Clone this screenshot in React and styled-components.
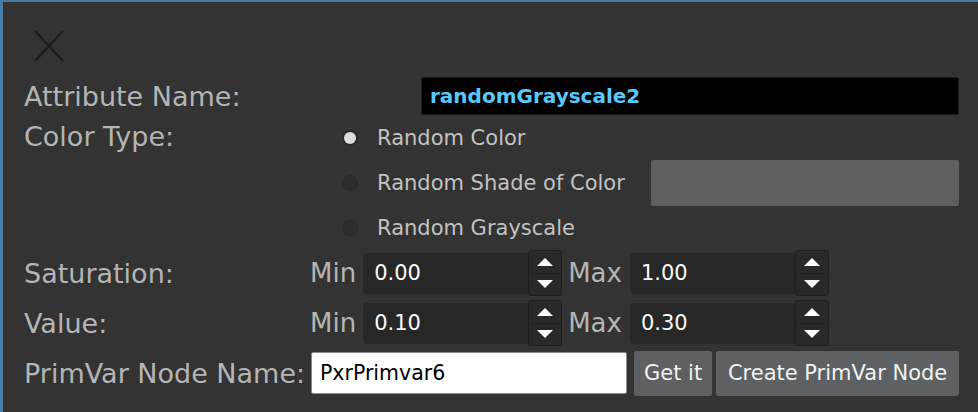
import React from 'react'
import styled, { createGlobalStyle } from 'styled-components'

const Global = createGlobalStyle`
  html, body { margin: 0; padding: 0; background: #333333; }
  body { font-family: "DejaVu Sans", "Liberation Sans", sans-serif; }
`

const Panel = styled.div`
  width: 978px;
  height: 412px;
  box-sizing: border-box;
  background: #333333;
  border-top: 2px solid #4a7ba3;
  border-left: 3px solid #4a7ba3;
  padding: 28px 19px 0 21px;
  display: flex;
  flex-direction: column;
`

const CloseButton = styled.button`
  width: 30px;
  height: 32px;
  margin-left: 10px;
  padding: 0;
  border: none;
  background: none;
  display: flex;
  cursor: pointer;
`

const Row = styled.div`
  display: flex;
  align-items: ${p => (p.top ? 'flex-start' : 'center')};
  height: ${p => p.h || 46}px;
  margin-top: ${p => p.mt || 0}px;
`

const Label = styled.div`
  width: ${p => p.w}px;
  flex: none;
  font-size: 27px;
  color: #b5b5b5;
  white-space: nowrap;
  line-height: ${p => (p.top ? '44px' : 'normal')};
`

const NameInput = styled.div`
  flex: 1;
  height: 38px;
  box-sizing: border-box;
  background: #000;
  border: 1px solid #1a1a1a;
  border-radius: 2px;
  padding-left: 8px;
  display: flex;
  align-items: center;
  font-size: 20px;
  font-weight: bold;
  color: #5ac8fa;
`

const Options = styled.div`
  flex: 1;
  display: flex;
  flex-direction: column;
`

const Option = styled.div`
  display: flex;
  align-items: center;
  height: 45px;
`

const Radio = styled.span`
  width: 20px;
  height: 20px;
  box-sizing: border-box;
  border-radius: 50%;
  background: #2d2d2d;
  border: 1px solid #3b3b3b;
  margin-right: 17px;
  display: flex;
  align-items: center;
  justify-content: center;
  &::after {
    content: '';
    width: 12px;
    height: 12px;
    border-radius: 50%;
    background: ${p => (p.on ? '#dcdcdc' : 'transparent')};
  }
`

const OptionText = styled.span`
  font-size: 21px;
  color: #c2c2c2;
`

const Swatch = styled.div`
  margin-left: auto;
  width: 308px;
  height: 46px;
  background: #5d6063;
  border-radius: 2px;
`

const MinMax = styled.span`
  font-size: 26px;
  color: #b5b5b5;
  margin-right: ${p => p.gap}px;
`

const SpinField = styled.div`
  width: 165px;
  height: 41px;
  box-sizing: border-box;
  background: #272727;
  border-radius: 4px 0 0 4px;
  padding-left: 11px;
  display: flex;
  align-items: center;
  font-size: 21px;
  color: #fafafa;
`

const Spinner = styled.div`
  width: 34px;
  height: 46px;
  box-sizing: border-box;
  background: #292929;
  border: 1px solid #1f1f1f;
  border-radius: 3px;
  display: flex;
  flex-direction: column;
  margin-right: 6px;
`

const SpinHalf = styled.div`
  flex: 1;
  display: flex;
  align-items: center;
  justify-content: center;
  & + & { border-top: 1px solid #222; }
`

const Arrow = styled.span`
  width: 0;
  height: 0;
  border-left: 8px solid transparent;
  border-right: 8px solid transparent;
  ${p => (p.down ? 'border-top: 8px solid #fff;' : 'border-bottom: 8px solid #fff;')}
`

const TextInput = styled.div`
  width: 316px;
  height: 42px;
  box-sizing: border-box;
  background: #fff;
  border: 1px solid #8a8a8a;
  border-radius: 2px;
  padding-left: 8px;
  display: flex;
  align-items: center;
  font-size: 20.5px;
  color: #000;
  margin-left: 8px;
`

const Button = styled.button`
  height: 45px;
  padding: 0 ${p => p.pad}px;
  margin-left: ${p => p.ml}px;
  border: none;
  border-radius: 2px;
  background: #5d6163;
  color: #f2f2f2;
  font-family: inherit;
  font-size: 21px;
  cursor: pointer;
  ${p => p.grow && 'flex: 1;'}
`

function Spin({ value }) {
  return (
    <>
      <SpinField>{value}</SpinField>
      <Spinner>
        <SpinHalf><Arrow /></SpinHalf>
        <SpinHalf><Arrow down /></SpinHalf>
      </Spinner>
    </>
  )
}

function RangeRow({ label, min, max, mt }) {
  return (
    <Row mt={mt}>
      <Label w={286}>{label}</Label>
      <MinMax gap={7}>Min</MinMax>
      <Spin value={min} />
      <MinMax gap={8}>Max</MinMax>
      <Spin value={max} />
    </Row>
  )
}

export default function App() {
  return (
    <>
      <Global />
      <Panel>
        <CloseButton aria-label="Close">
          <svg width="30" height="32" viewBox="0 0 30 32">
            <path d="M1 1 L29 31 M29 1 L1 31" stroke="#1b1b1b" strokeWidth="2" fill="none" />
          </svg>
        </CloseButton>
        <Row h={38} mt={15}>
          <Label w={397}>Attribute Name:</Label>
          <NameInput>randomGrayscale2</NameInput>
        </Row>
        <Row h={135} top>
          <Label w={316} top>Color Type:</Label>
          <Options>
            <Option>
              <Radio on />
              <OptionText>Random Color</OptionText>
            </Option>
            <Option>
              <Radio />
              <OptionText>Random Shade of Color</OptionText>
              <Swatch />
            </Option>
            <Option>
              <Radio />
              <OptionText>Random Grayscale</OptionText>
            </Option>
          </Options>
        </Row>
        <RangeRow label="Saturation:" min="0.00" max="1.00" />
        <RangeRow label="Value:" min="0.10" max="0.30" mt={4} />
        <Row mt={4}>
          <Label w={279}>PrimVar Node Name:</Label>
          <TextInput>PxrPrimvar6</TextInput>
          <Button pad={10} ml={7}>Get it</Button>
          <Button pad={10} ml={4} grow>Create PrimVar Node</Button>
        </Row>
      </Panel>
    </>
  )
}
